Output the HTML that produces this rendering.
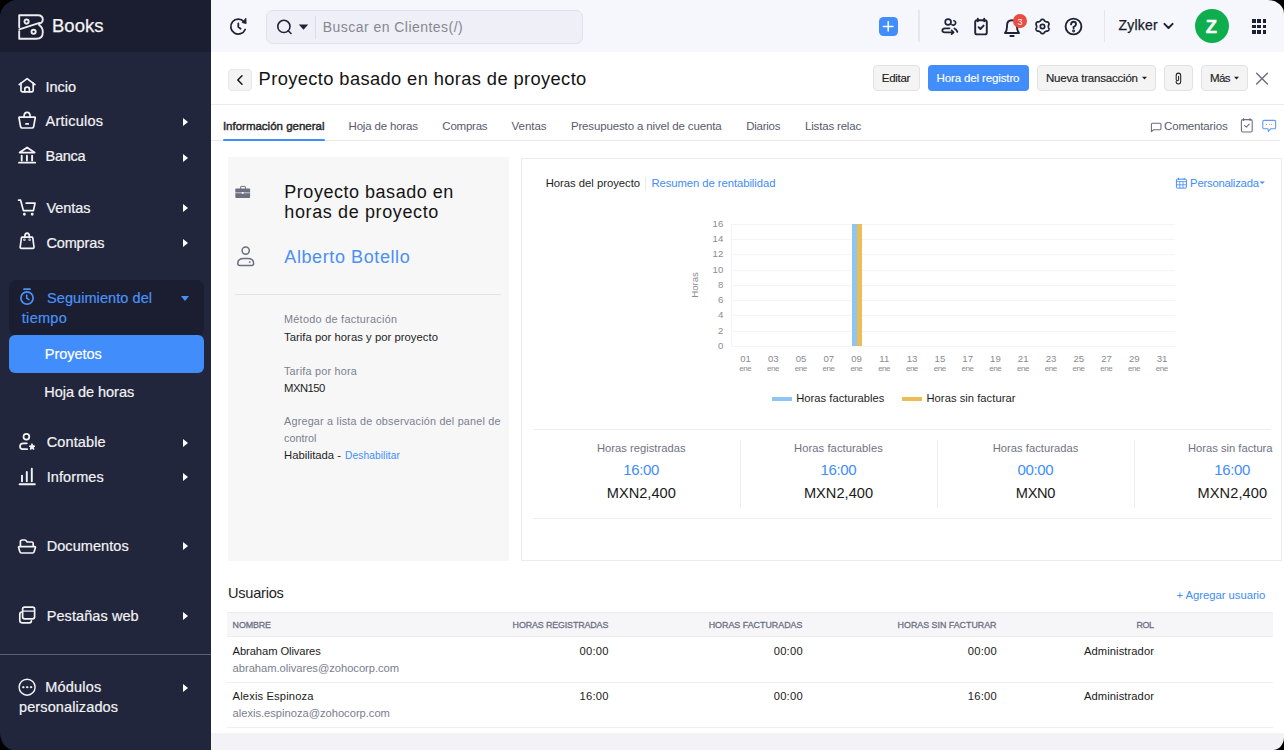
<!DOCTYPE html>
<html><head><meta charset="utf-8">
<style>
*{box-sizing:border-box;margin:0;padding:0}
html,body{width:1284px;height:750px;overflow:hidden;background:#000}
body{font-family:"Liberation Sans",sans-serif;color:#21263c}
.app{position:absolute;left:0;top:0;width:1284px;height:750px;border-radius:18px 16px 11px 14px / 18px 14px 13px 18px;overflow:hidden;background:transparent}
.t{position:absolute;white-space:nowrap}
.b{position:absolute}
</style></head><body><div class="app">
<div class="b" style="left:0px;top:0px;width:211px;height:750px;background:#22263c"></div>
<div class="b" style="left:0px;top:0px;width:211px;height:52px;background:#1b1e30"></div>
<svg class="b" style="left:18px;top:14px" width="26" height="26" viewBox="0 0 26 26" fill="none" stroke="#ececf0" stroke-width="1.9" stroke-linecap="round" stroke-linejoin="round">
<path d="M1.2 13.2 V1.2 H20 Q24.8 1.2 24.8 5.8 Q24.8 8.6 20.8 10"/>
<path d="M1.4 15.4 L21.4 8.9"/>
<path d="M1.2 17.2 V24.8 H18.2 Q24.8 24.8 24.8 18.2 Q24.8 13.4 21.2 11.3"/>
<circle cx="8.6" cy="7.6" r="2.1"/><circle cx="15.6" cy="17.8" r="2.1"/></svg>
<div class="t" style="left:52.00px;top:17.00px;font-size:18.5px;line-height:18.5px;color:#f4f4f6;font-weight:normal;letter-spacing:0.021px;-webkit-text-stroke:0.25px #f4f4f6;">Books</div>
<div class="t" style="left:45.50px;top:80.00px;font-size:14.5px;line-height:14.5px;color:#f2f2f5;font-weight:normal;letter-spacing:-0.032px;-webkit-text-stroke:0.2px #f2f2f5;">Incio</div>
<div class="t" style="left:45.50px;top:114.00px;font-size:14.5px;line-height:14.5px;color:#f2f2f5;font-weight:normal;letter-spacing:0.250px;-webkit-text-stroke:0.2px #f2f2f5;">Articulos</div>
<div class="t" style="left:45.50px;top:149.00px;font-size:14.5px;line-height:14.5px;color:#f2f2f5;font-weight:normal;letter-spacing:-0.278px;-webkit-text-stroke:0.2px #f2f2f5;">Banca</div>
<div class="t" style="left:46.40px;top:201.00px;font-size:14.5px;line-height:14.5px;color:#f2f2f5;font-weight:normal;letter-spacing:-0.068px;-webkit-text-stroke:0.2px #f2f2f5;">Ventas</div>
<div class="t" style="left:46.40px;top:236.00px;font-size:14.5px;line-height:14.5px;color:#f2f2f5;font-weight:normal;letter-spacing:-0.137px;-webkit-text-stroke:0.2px #f2f2f5;">Compras</div>
<div class="t" style="left:46.70px;top:435.00px;font-size:14.5px;line-height:14.5px;color:#f2f2f5;font-weight:normal;letter-spacing:0.137px;-webkit-text-stroke:0.2px #f2f2f5;">Contable</div>
<div class="t" style="left:46.70px;top:470.00px;font-size:14.5px;line-height:14.5px;color:#f2f2f5;font-weight:normal;letter-spacing:0.085px;-webkit-text-stroke:0.2px #f2f2f5;">Informes</div>
<div class="t" style="left:46.70px;top:539.00px;font-size:14.5px;line-height:14.5px;color:#f2f2f5;font-weight:normal;letter-spacing:0.067px;-webkit-text-stroke:0.2px #f2f2f5;">Documentos</div>
<div class="t" style="left:46.70px;top:609.00px;font-size:14.5px;line-height:14.5px;color:#f2f2f5;font-weight:normal;letter-spacing:0.083px;-webkit-text-stroke:0.2px #f2f2f5;">Pestañas web</div>
<div class="t" style="left:45.30px;top:680.00px;font-size:14.5px;line-height:14.5px;color:#f2f2f5;font-weight:normal;letter-spacing:0.199px;-webkit-text-stroke:0.2px #f2f2f5;">Módulos</div>
<div class="t" style="left:19.00px;top:700.00px;font-size:14.5px;line-height:14.5px;color:#f2f2f5;font-weight:normal;letter-spacing:0.113px;-webkit-text-stroke:0.2px #f2f2f5;">personalizados</div>
<div class="b" style="left:9px;top:280px;width:195px;height:56px;background:#1b1e30;border-radius:8px"></div>
<div class="t" style="left:47.00px;top:291.00px;font-size:14.5px;line-height:14.5px;color:#4a92f6;font-weight:normal;letter-spacing:0.073px;-webkit-text-stroke:0.2px #4a92f6;">Seguimiento del</div>
<div class="t" style="left:21.80px;top:311.00px;font-size:14.5px;line-height:14.5px;color:#4a92f6;font-weight:normal;letter-spacing:0.296px;-webkit-text-stroke:0.2px #4a92f6;">tiempo</div>
<div class="b" style="left:9px;top:335px;width:195px;height:38px;background:#408dfb;border-radius:6px"></div>
<div class="t" style="left:44.80px;top:347.00px;font-size:14.5px;line-height:14.5px;color:#fff;font-weight:normal;letter-spacing:-0.032px;-webkit-text-stroke:0.2px #fff;">Proyetos</div>
<div class="t" style="left:44.20px;top:385.00px;font-size:14.5px;line-height:14.5px;color:#f2f2f5;font-weight:normal;letter-spacing:-0.023px;-webkit-text-stroke:0.2px #f2f2f5;">Hoja de horas</div>
<div class="b" style="left:182.5px;top:117.9px;width:0;height:0;border-left:5px solid #fff;border-top:4.5px solid transparent;border-bottom:4.5px solid transparent"></div>
<div class="b" style="left:182.5px;top:153.5px;width:0;height:0;border-left:5px solid #fff;border-top:4.5px solid transparent;border-bottom:4.5px solid transparent"></div>
<div class="b" style="left:182.5px;top:204.0px;width:0;height:0;border-left:5px solid #fff;border-top:4.5px solid transparent;border-bottom:4.5px solid transparent"></div>
<div class="b" style="left:182.5px;top:239.2px;width:0;height:0;border-left:5px solid #fff;border-top:4.5px solid transparent;border-bottom:4.5px solid transparent"></div>
<div class="b" style="left:182.5px;top:439.0px;width:0;height:0;border-left:5px solid #fff;border-top:4.5px solid transparent;border-bottom:4.5px solid transparent"></div>
<div class="b" style="left:182.5px;top:472.7px;width:0;height:0;border-left:5px solid #fff;border-top:4.5px solid transparent;border-bottom:4.5px solid transparent"></div>
<div class="b" style="left:182.5px;top:542.4px;width:0;height:0;border-left:5px solid #fff;border-top:4.5px solid transparent;border-bottom:4.5px solid transparent"></div>
<div class="b" style="left:182.5px;top:611.5px;width:0;height:0;border-left:5px solid #fff;border-top:4.5px solid transparent;border-bottom:4.5px solid transparent"></div>
<div class="b" style="left:182.5px;top:683.5px;width:0;height:0;border-left:5px solid #fff;border-top:4.5px solid transparent;border-bottom:4.5px solid transparent"></div>
<div class="b" style="left:180.5px;top:296.2px;width:0;height:0;border-top:5px solid #4a92f6;border-left:4.5px solid transparent;border-right:4.5px solid transparent"></div>
<div class="b" style="left:0px;top:654px;width:211px;height:1px;background:#5d6072"></div>
<svg class="b" style="left:0;top:0" width="211" height="750" viewBox="0 0 211 750" fill="none" stroke="#f4f4f6" stroke-width="1.7" stroke-linecap="round" stroke-linejoin="round">
<path d="M19.2 84.6 L27.1 78.6 L35 84.6"/>
<path d="M21 83.2 V90.6 Q21 91.8 22.2 91.8 H32 Q33.2 91.8 33.2 90.6 V83.2"/>
<path d="M24.8 91.8 V89.2 Q24.8 87.2 27.1 87.2 Q29.4 87.2 29.4 89.2 V91.8"/>
<path d="M24 116.8 Q24 112.4 27.1 112.4 Q30.2 112.4 30.2 116.8"/>
<path d="M19.4 117.2 H34.8 Q35.4 117.2 35.2 118 L33.6 126.8 Q33.3 128 32 128 H22.2 Q20.9 128 20.6 126.8 L19 118 Q18.8 117.2 19.4 117.2 Z"/>
<path d="M25.9 123.9 H28.3"/>
<path d="M19.6 152.6 L27.1 147.4 L34.6 152.6 Z" stroke-width="1.8"/>
<path d="M21.7 155.8 V160.6 M26.9 155.8 V160.6 M32.1 155.8 V160.6" stroke-width="1.9"/>
<path d="M19 162.7 H35.2" stroke-width="1.8"/>
<path d="M18.6 200.2 H20.6 L23.4 210.6 H33.4 L35 203.2 H26.2"/>
<circle cx="24.4" cy="214.2" r="0.6" fill="#f4f4f6"/><circle cx="32.2" cy="214.2" r="0.6" fill="#f4f4f6"/>
<path d="M24.8 237 Q24.8 233.2 27.1 233.2 Q29.4 233.2 29.4 237"/>
<path d="M22.4 237.2 H31.8 Q32.6 237.2 32.8 238 L34 247 Q34.1 248.4 32.8 248.4 H21.4 Q20.1 248.4 20.2 247 L21.4 238 Q21.6 237.2 22.4 237.2 Z"/>
<circle cx="24.4" cy="239.8" r="0.35" fill="#f4f4f6"/><circle cx="29.6" cy="239.8" r="0.35" fill="#f4f4f6"/>
<circle cx="26.4" cy="436.7" r="2.9"/>
<path d="M26.8 443.3 H23.4 Q20 443.3 20 446.6 Q20 449.2 22.6 449.2 H27.2"/>
<path d="M32.10 444.00 L33.01 445.75 L34.95 446.07 L33.57 447.48 L33.86 449.43 L32.10 448.55 L30.34 449.43 L30.63 447.48 L29.25 446.07 L31.19 445.75 Z" fill="#f4f4f6" stroke-width="1"/>
<path d="M22 481.2 V475.6 M26.8 481.2 V472 M31.8 481.2 V468.6" stroke-width="1.9"/>
<path d="M19.6 484.3 H34.8" stroke-width="1.9"/>
<path d="M20.4 545.6 V541.8 Q20.4 540 22.2 540 H24.8 Q25.6 540 26.2 540.8 L27.2 542 H31.6 Q33.2 542 33.2 543.6 V545.6"/>
<path d="M19.2 546.6 H34.8 Q35.6 546.6 35.4 547.6 L34.2 551.6 Q33.9 553 32.4 553 H21.6 Q20.1 553 19.8 551.6 L18.6 547.6 Q18.4 546.6 19.2 546.6 Z"/>
<path d="M22 612 Q19.8 612 19.8 614.2 V620.6 Q19.8 622.8 22 622.8 H29.4 Q31.4 622.8 31.4 620.8"/>
<rect x="22.6" y="607.2" width="12" height="11.6" rx="2"/>
<path d="M22.8 611.2 H34.4" stroke-width="1.2"/>
<circle cx="27.1" cy="687.2" r="8" stroke-width="1.4"/>
<circle cx="23.2" cy="687.2" r="0.7" fill="#f4f4f6" stroke-width="1"/><circle cx="27.1" cy="687.2" r="0.7" fill="#f4f4f6" stroke-width="1"/><circle cx="31" cy="687.2" r="0.7" fill="#f4f4f6" stroke-width="1"/>
<path d="M24 289.2 H30" stroke="#4a92f6" stroke-width="1.8"/>
<circle cx="27" cy="298" r="6.1" stroke="#4a92f6" stroke-width="1.7"/>
<path d="M26.7 295 V298.2 L28.9 299.6" stroke="#4a92f6" stroke-width="1.6"/>
</svg>
<div class="b" style="left:211px;top:0px;width:1073px;height:52px;background:#f6f7fc"></div>
<div class="b" style="left:266px;top:10px;width:316.5px;height:33.5px;background:#eeeff7;border:1px solid #e0e1e9;border-radius:7px"></div>
<div class="b" style="left:315px;top:15.5px;width:1px;height:23.0px;background:#dcdde6"></div>
<div class="t" style="left:322.70px;top:20.00px;font-size:14px;line-height:14px;color:#87888f;font-weight:normal;letter-spacing:0.464px;">Buscar en Clientes(/)</div>
<div class="b" style="left:879px;top:17px;width:19px;height:19px;background:#408dfb;border-radius:4.5px"></div>
<div class="b" style="left:918.3px;top:10px;width:1.5px;height:32px;background:#e6e7ec"></div>
<div class="b" style="left:1103.6px;top:10px;width:1.400000000000091px;height:32px;background:#e6e7ec"></div>
<div class="t" style="left:1118.60px;top:18.00px;font-size:14px;line-height:14px;color:#171a26;font-weight:normal;letter-spacing:0.178px;-webkit-text-stroke:0.25px #171a26;">Zylker</div>
<div class="b" style="left:1194.8px;top:9.2px;width:34.2px;height:34.2px;border-radius:50%;background:#0eae4f"></div>
<div class="t" style="left:1205.85px;top:18.00px;font-size:18.5px;line-height:18.5px;color:#fff;font-weight:bold;-webkit-text-stroke:0.4px #fff;">Z</div>
<svg class="b" style="left:0;top:0" width="1284" height="52" viewBox="0 0 1284 52" fill="none" stroke="#1f2337" stroke-width="1.9" stroke-linecap="round" stroke-linejoin="round">
<path d="M243.9 21.6 A7.5 7.5 0 1 0 245.2 29.5" stroke-width="1.8"/>
<path d="M245.9 18.6 L246.1 23.6 L242.4 22.6 Z" fill="#1f2337" stroke-width="0.9"/>
<path d="M238.3 23.3 V26.9 L240.6 28.7" stroke-width="1.8"/>
<circle cx="283.9" cy="26.4" r="6.1" stroke-width="1.6"/>
<path d="M288.3 30.8 L291 33.5" stroke-width="1.6"/>
<path d="M298.8 24.6 H308.2 L303.5 29.8 Z" fill="#1f2337" stroke="none"/>
<path d="M883.4 26.4 H893 M888.2 21.8 V31" stroke="#fff" stroke-width="1.5"/>
<path d="M1164.4 23.9 L1168.5 28 L1172.6 23.9" stroke-width="2"/>
<circle cx="948.1" cy="22" r="2.9" stroke-width="1.7"/>
<path d="M954 20.7 A2.3 2.3 0 1 1 951.9 24.7" stroke-width="1.7"/>
<path d="M949.5 28.3 H945 Q942.3 28.6 942.3 30.5 Q942.3 32.4 945 32.4 H953" stroke-width="1.7"/>
<path d="M951.6 30.3 L953.6 32.3 L951.6 34.2" stroke-width="1.7"/>
<path d="M954.4 28.5 Q956.6 29.6 957.4 31.9" stroke-width="1.7"/>
<rect x="975.2" y="20.2" width="11.6" height="14.2" rx="2"/>
<path d="M977.8 18.6 V21.2 M984.2 18.6 V21.2"/>
<path d="M978.6 27.2 L980.4 29 L983.6 25.6"/>
<path d="M1005 33 H1019 Q1017 30.6 1017 27 V25.4 Q1017 20.2 1012 20.2 Q1007 20.2 1007 25.4 V27 Q1007 30.6 1005 33 Z"/>
<path d="M1010.4 36 H1013.6" stroke-width="2"/>
<path d="M1048.35 26.50 L1048.35 26.70 L1048.37 26.91 L1048.40 27.12 L1048.43 27.33 L1048.48 27.55 L1048.54 27.78 L1048.64 28.03 L1048.91 28.34 L1048.99 28.61 L1049.01 28.87 L1049.00 29.13 L1048.96 29.38 L1048.90 29.62 L1048.81 29.85 L1048.69 30.07 L1048.56 30.28 L1048.40 30.48 L1048.22 30.66 L1048.02 30.82 L1047.81 30.95 L1047.57 31.06 L1047.30 31.13 L1046.90 31.06 L1046.63 31.09 L1046.40 31.15 L1046.19 31.22 L1045.98 31.30 L1045.79 31.38 L1045.60 31.47 L1045.42 31.57 L1045.25 31.67 L1045.08 31.79 L1044.91 31.92 L1044.74 32.05 L1044.58 32.21 L1044.41 32.38 L1044.25 32.59 L1044.11 32.97 L1043.92 33.17 L1043.70 33.32 L1043.48 33.44 L1043.24 33.53 L1043.00 33.60 L1042.75 33.64 L1042.50 33.65 L1042.25 33.64 L1042.00 33.60 L1041.76 33.53 L1041.52 33.44 L1041.30 33.32 L1041.08 33.17 L1040.89 32.97 L1040.75 32.59 L1040.59 32.38 L1040.42 32.21 L1040.26 32.05 L1040.09 31.92 L1039.92 31.79 L1039.75 31.67 L1039.58 31.57 L1039.40 31.47 L1039.21 31.38 L1039.02 31.30 L1038.81 31.22 L1038.60 31.15 L1038.37 31.09 L1038.10 31.06 L1037.70 31.13 L1037.43 31.06 L1037.19 30.95 L1036.98 30.82 L1036.78 30.66 L1036.60 30.48 L1036.44 30.28 L1036.31 30.07 L1036.19 29.85 L1036.10 29.62 L1036.04 29.38 L1036.00 29.13 L1035.99 28.87 L1036.01 28.61 L1036.09 28.34 L1036.36 28.03 L1036.46 27.78 L1036.52 27.55 L1036.57 27.33 L1036.60 27.12 L1036.63 26.91 L1036.65 26.70 L1036.65 26.50 L1036.65 26.30 L1036.63 26.09 L1036.60 25.88 L1036.57 25.67 L1036.52 25.45 L1036.46 25.22 L1036.36 24.97 L1036.09 24.66 L1036.01 24.39 L1035.99 24.13 L1036.00 23.87 L1036.04 23.62 L1036.10 23.38 L1036.19 23.15 L1036.31 22.92 L1036.44 22.72 L1036.60 22.52 L1036.78 22.34 L1036.98 22.18 L1037.19 22.05 L1037.43 21.94 L1037.70 21.87 L1038.10 21.94 L1038.37 21.91 L1038.60 21.85 L1038.81 21.78 L1039.02 21.70 L1039.21 21.62 L1039.40 21.53 L1039.58 21.43 L1039.75 21.33 L1039.92 21.21 L1040.09 21.08 L1040.26 20.95 L1040.42 20.79 L1040.59 20.62 L1040.75 20.41 L1040.89 20.03 L1041.08 19.83 L1041.30 19.68 L1041.52 19.56 L1041.76 19.47 L1042.00 19.40 L1042.25 19.36 L1042.50 19.35 L1042.75 19.36 L1043.00 19.40 L1043.24 19.47 L1043.48 19.56 L1043.70 19.68 L1043.92 19.83 L1044.11 20.03 L1044.25 20.41 L1044.41 20.62 L1044.58 20.79 L1044.74 20.95 L1044.91 21.08 L1045.08 21.21 L1045.25 21.33 L1045.42 21.43 L1045.60 21.53 L1045.79 21.62 L1045.98 21.70 L1046.19 21.78 L1046.40 21.85 L1046.63 21.91 L1046.90 21.94 L1047.30 21.87 L1047.57 21.94 L1047.81 22.05 L1048.02 22.18 L1048.22 22.34 L1048.40 22.52 L1048.56 22.72 L1048.69 22.92 L1048.81 23.15 L1048.90 23.38 L1048.96 23.62 L1049.00 23.87 L1049.01 24.13 L1048.99 24.39 L1048.91 24.66 L1048.64 24.97 L1048.54 25.22 L1048.48 25.45 L1048.43 25.67 L1048.40 25.88 L1048.37 26.09 L1048.35 26.30 L1048.35 26.50 Z" stroke-width="1.7"/>
<circle cx="1042.5" cy="26.5" r="2.2" stroke-width="1.7"/>
<circle cx="1073.5" cy="26.5" r="7.9"/>
<path d="M1071.1 24.4 Q1071.1 21.8 1073.6 21.8 Q1076 21.8 1076 24.2 Q1076 25.8 1073.6 26.8 V28.2"/>
<circle cx="1073.6" cy="31" r="0.5" fill="#1f2337"/>
</svg>
<div class="b" style="left:1013.2px;top:14.2px;width:13.8px;height:13.8px;border-radius:50%;background:#ec4b41"></div>
<div class="t" style="left:1017.60px;top:18.00px;font-size:9px;line-height:9px;color:#fff;font-weight:normal;">3</div>
<div class="b" style="left:1252.0px;top:19.2px;width:3.7000000000000455px;height:3.6999999999999993px;background:#1c2034"></div>
<div class="b" style="left:1252.0px;top:24.6px;width:3.7000000000000455px;height:3.6999999999999993px;background:#1c2034"></div>
<div class="b" style="left:1252.0px;top:30.0px;width:3.7000000000000455px;height:3.700000000000003px;background:#1c2034"></div>
<div class="b" style="left:1257.25px;top:19.2px;width:3.7000000000000455px;height:3.6999999999999993px;background:#1c2034"></div>
<div class="b" style="left:1257.25px;top:24.6px;width:3.7000000000000455px;height:3.6999999999999993px;background:#1c2034"></div>
<div class="b" style="left:1257.25px;top:30.0px;width:3.7000000000000455px;height:3.700000000000003px;background:#1c2034"></div>
<div class="b" style="left:1262.5px;top:19.2px;width:3.7000000000000455px;height:3.6999999999999993px;background:#1c2034"></div>
<div class="b" style="left:1262.5px;top:24.6px;width:3.7000000000000455px;height:3.6999999999999993px;background:#1c2034"></div>
<div class="b" style="left:1262.5px;top:30.0px;width:3.7000000000000455px;height:3.700000000000003px;background:#1c2034"></div>
<div class="b" style="left:211px;top:52px;width:1073px;height:681px;background:#fff"></div>
<div class="b" style="left:211px;top:103.5px;width:1073px;height:1.0px;background:#ebebef"></div>
<div class="b" style="left:228px;top:69px;width:24px;height:22px;background:#f4f4f5;border:1px solid #e6e6e9;border-radius:4px"></div>
<svg class="b" style="left:228px;top:69px" width="24" height="22" viewBox="0 0 24 22" fill="none" stroke="#1c1c1c" stroke-width="1.6" stroke-linecap="round" stroke-linejoin="round"><path d="M14 6.8 L9.8 11 L14 15.2"/></svg>
<div class="t" style="left:258.60px;top:70.00px;font-size:18.3px;line-height:18.3px;color:#141414;font-weight:normal;letter-spacing:0.390px;">Proyecto basado en horas de proyecto</div>
<div class="b" style="left:873px;top:65px;width:46.5px;height:26px;background:#f4f4f5;border:1px solid #e2e2e6;border-radius:4px"></div>
<div class="t" style="left:881.80px;top:73.00px;font-size:11.5px;line-height:11.5px;color:#222;font-weight:normal;letter-spacing:-0.288px;-webkit-text-stroke:0.15px #222;">Editar</div>
<div class="b" style="left:928px;top:65px;width:100.59999999999991px;height:26px;background:#408dfb;border-radius:4px"></div>
<div class="t" style="left:936.50px;top:73.00px;font-size:11.5px;line-height:11.5px;color:#fff;font-weight:normal;letter-spacing:-0.126px;-webkit-text-stroke:0.15px #fff;">Hora del registro</div>
<div class="b" style="left:1037.4px;top:65.2px;width:118.39999999999986px;height:25.799999999999997px;background:#f4f4f5;border:1px solid #e2e2e6;border-radius:4px"></div>
<div class="t" style="left:1046.00px;top:73.00px;font-size:11.5px;line-height:11.5px;color:#222;font-weight:normal;letter-spacing:-0.203px;-webkit-text-stroke:0.15px #222;">Nueva transacción</div>
<div class="b" style="left:1164.3px;top:65.2px;width:28.299999999999955px;height:25.799999999999997px;background:#f4f4f5;border:1px solid #e2e2e6;border-radius:4px"></div>
<div class="b" style="left:1201.3px;top:65.2px;width:46.700000000000045px;height:25.799999999999997px;background:#f4f4f5;border:1px solid #e2e2e6;border-radius:4px"></div>
<div class="t" style="left:1210.10px;top:73.00px;font-size:11.5px;line-height:11.5px;color:#222;font-weight:normal;letter-spacing:-0.663px;-webkit-text-stroke:0.15px #222;">Más</div>
<svg class="b" style="left:0;top:52px" width="1284" height="52" viewBox="0 52 1284 52" fill="none" stroke="#222" stroke-linecap="round" stroke-linejoin="round">
<path d="M1142 76.8 H1147 L1144.5 79.6 Z" fill="#222" stroke="none"/>
<path d="M1234 76.8 H1239 L1236.5 79.6 Z" fill="#222" stroke="none"/>
<path d="M1256.6 73.2 L1267.4 84 M1267.4 73.2 L1256.6 84" stroke="#6f7280" stroke-width="1.5"/>
<path d="M1176.1 81.4 Q1176.1 83.9 1178.4 83.9 Q1180.7 83.9 1180.7 81.4 V75.5 Q1180.7 73.1 1178.4 73.1 Q1176.2 73.1 1176.2 75.5 V79.5 Q1176.2 80.8 1177.4 80.8 Q1178.6 80.8 1178.6 79.5 V76.3" stroke-width="1.05"/>
</svg>
<div class="b" style="left:211px;top:140px;width:1069px;height:1px;background:#e8e8ec"></div>
<div class="t" style="left:222.90px;top:121.00px;font-size:11.5px;line-height:11.5px;color:#2a2a2e;font-weight:normal;letter-spacing:-0.003px;-webkit-text-stroke:0.45px #2a2a2e;">Información general</div>
<div class="b" style="left:222.5px;top:139px;width:102.5px;height:2px;background:#408dfb;border-radius:1px"></div>
<div class="t" style="left:348.50px;top:121.00px;font-size:11.5px;line-height:11.5px;color:#575b6d;font-weight:normal;letter-spacing:-0.175px;">Hoja de horas</div>
<div class="t" style="left:442.30px;top:121.00px;font-size:11.5px;line-height:11.5px;color:#575b6d;font-weight:normal;letter-spacing:-0.225px;">Compras</div>
<div class="t" style="left:511.60px;top:121.00px;font-size:11.5px;line-height:11.5px;color:#575b6d;font-weight:normal;letter-spacing:-0.054px;">Ventas</div>
<div class="t" style="left:570.90px;top:121.00px;font-size:11.5px;line-height:11.5px;color:#575b6d;font-weight:normal;letter-spacing:-0.140px;">Presupuesto a nivel de cuenta</div>
<div class="t" style="left:746.30px;top:121.00px;font-size:11.5px;line-height:11.5px;color:#575b6d;font-weight:normal;letter-spacing:-0.281px;">Diarios</div>
<div class="t" style="left:805.00px;top:121.00px;font-size:11.5px;line-height:11.5px;color:#575b6d;font-weight:normal;letter-spacing:-0.179px;">Listas relac</div>
<div class="t" style="left:1164.00px;top:121.00px;font-size:11.5px;line-height:11.5px;color:#575b6d;font-weight:normal;letter-spacing:-0.149px;">Comentarios</div>
<svg class="b" style="left:0;top:104px" width="1284" height="40" viewBox="0 104 1284 40" fill="none" stroke="#6b6f80" stroke-width="1.1" stroke-linecap="round" stroke-linejoin="round">
<path d="M1151.4 131.6 V124.4 Q1151.4 123.2 1152.6 123.2 H1159.8 Q1161 123.2 1161 124.4 V128.6 Q1161 129.8 1159.8 129.8 H1153.6 L1151.4 131.6 Z"/>
<rect x="1241.4" y="119.6" width="10.8" height="12.4" rx="1.6"/>
<path d="M1243.6 118.6 V120.4 M1250 118.6 V120.4"/>
<path d="M1244.6 125.6 L1246.4 127.2 L1249.2 124.2"/>
<path d="M1263.9 120.4 H1274.5 Q1275.6 120.4 1275.6 121.5 V127.7 Q1275.6 128.8 1274.5 128.8 H1270.6 L1268.3 131.4 L1268 128.8 H1263.9 Q1262.8 128.8 1262.8 127.7 V121.5 Q1262.8 120.4 1263.9 120.4 Z" stroke="#5c9cf2" stroke-width="1.1"/>
</svg>
<div class="b" style="left:1266px;top:124px;width:1.3px;height:1.3px;background:#e26a6a;border-radius:50%"></div><div class="b" style="left:1268.6px;top:124px;width:1.3px;height:1.3px;background:#e26a6a;border-radius:50%"></div><div class="b" style="left:1271.2px;top:124px;width:1.3px;height:1.3px;background:#e26a6a;border-radius:50%"></div>
<div class="b" style="left:227.5px;top:157px;width:281.5px;height:403.5px;background:#f7f7f8"></div>
<svg class="b" style="left:0;top:150px" width="520" height="130" viewBox="0 150 520 130" fill="none" stroke="#6b6f80" stroke-linecap="round" stroke-linejoin="round">
<path d="M240.6 188.8 V187 Q240.6 186.4 241.2 186.4 H244.8 Q245.4 186.4 245.4 187 V188.8" stroke-width="1"/>
<rect x="235.3" y="188.6" width="14.8" height="9.5" rx="1" fill="#6b6f80" stroke="none"/>
<path d="M235.3 192.8 H250.1" stroke="#f7f7f8" stroke-width="0.7"/>
<rect x="241.8" y="192" width="1.8" height="1.8" fill="#f7f7f8" stroke="none"/>
<circle cx="245.7" cy="250.6" r="3.6" stroke-width="1.5"/>
<path d="M240 265.4 H251.6 Q253.6 265.4 253.6 263.4 Q253.6 258.6 247.6 258.6 H243.8 Q237.8 258.6 237.8 263.4 Q237.8 265.4 240 265.4 Z" stroke-width="1.5"/>
<circle cx="249.6" cy="262.1" r="0.45" fill="#6b6f80" stroke-width="0.8"/>
</svg>
<div class="t" style="left:284.30px;top:183.00px;font-size:18px;line-height:18px;color:#141414;font-weight:normal;letter-spacing:0.523px;">Proyecto basado en</div>
<div class="t" style="left:284.30px;top:203.00px;font-size:18px;line-height:18px;color:#141414;font-weight:normal;letter-spacing:0.619px;">horas de proyecto</div>
<div class="t" style="left:284.30px;top:248.00px;font-size:18px;line-height:18px;color:#4b8ff3;font-weight:normal;letter-spacing:0.595px;">Alberto Botello</div>
<div class="b" style="left:235px;top:294px;width:266px;height:1px;background:#e4e4e8"></div>
<div class="t" style="left:284.00px;top:314.00px;font-size:10.8px;line-height:10.8px;color:#7b7f90;font-weight:normal;letter-spacing:0.307px;">Método de facturación</div>
<div class="t" style="left:284.00px;top:332.00px;font-size:11.3px;line-height:11.3px;color:#1e1e1e;font-weight:normal;letter-spacing:0.025px;">Tarifa por horas y por proyecto</div>
<div class="t" style="left:284.00px;top:366.00px;font-size:10.8px;line-height:10.8px;color:#7b7f90;font-weight:normal;letter-spacing:0.226px;">Tarifa por hora</div>
<div class="t" style="left:284.00px;top:383.00px;font-size:11.3px;line-height:11.3px;color:#1e1e1e;font-weight:normal;letter-spacing:-0.533px;">MXN150</div>
<div class="t" style="left:284.00px;top:416.00px;font-size:10.8px;line-height:10.8px;color:#7b7f90;font-weight:normal;letter-spacing:0.211px;">Agregar a lista de observación del panel de</div>
<div class="t" style="left:284.00px;top:433.00px;font-size:10.8px;line-height:10.8px;color:#7b7f90;font-weight:normal;">control</div>
<div class="t" style="left:284.00px;top:450.00px;font-size:11.3px;line-height:11.3px;color:#1e1e1e;font-weight:normal;letter-spacing:-0.014px;">Habilitada -</div>
<div class="t" style="left:345.00px;top:451.00px;font-size:10.2px;line-height:10.2px;color:#408dfb;font-weight:normal;letter-spacing:0.104px;">Deshabilitar</div>
<div class="b" style="left:521px;top:157.5px;width:760.5px;height:403.5px;background:#fff;border:1px solid #ececf0"></div>
<div class="t" style="left:545.70px;top:178.00px;font-size:11.3px;line-height:11.3px;color:#1e1e1e;font-weight:normal;letter-spacing:-0.026px;">Horas del proyecto</div>
<div class="b" style="left:645.3px;top:177px;width:1.0px;height:14px;background:#ebebef"></div>
<div class="t" style="left:651.40px;top:178.00px;font-size:11.3px;line-height:11.3px;color:#408dfb;font-weight:normal;letter-spacing:-0.070px;">Resumen de rentabilidad</div>
<div class="t" style="left:1190.10px;top:178.00px;font-size:11.3px;line-height:11.3px;color:#408dfb;font-weight:normal;letter-spacing:-0.226px;">Personalizada</div>
<svg class="b" style="left:1170px;top:172px" width="100" height="24" viewBox="1170 172 100 24" fill="none" stroke="#408dfb" stroke-width="1" >
<rect x="1176.4" y="179.2" width="10" height="8.9" rx="0.8"/>
<path d="M1176.4 181.6 H1186.4 M1176.4 184.8 H1186.4 M1179.8 181.6 V188 M1183 181.6 V188" stroke-width="0.8"/>
<path d="M1178.6 177.8 V180 M1184.2 177.8 V180"/>
<path d="M1259.6 181.4 H1264.9 L1262.25 184 Z" fill="#408dfb" stroke="none"/>
</svg>
<div class="b" style="left:731.7px;top:346.0px;width:443.29999999999995px;height:1.0px;background:#f4f4f6"></div>
<div class="t" style="left:717.96px;top:341.00px;font-size:9.6px;line-height:9.6px;color:#8b8b90;font-weight:normal;">0</div>
<div class="b" style="left:731.7px;top:330.7px;width:443.29999999999995px;height:1.0px;background:#f4f4f6"></div>
<div class="t" style="left:717.96px;top:326.00px;font-size:9.6px;line-height:9.6px;color:#8b8b90;font-weight:normal;">2</div>
<div class="b" style="left:731.7px;top:315.4px;width:443.29999999999995px;height:1.0px;background:#f4f4f6"></div>
<div class="t" style="left:717.96px;top:310.00px;font-size:9.6px;line-height:9.6px;color:#8b8b90;font-weight:normal;">4</div>
<div class="b" style="left:731.7px;top:300.1px;width:443.29999999999995px;height:1.0px;background:#f4f4f6"></div>
<div class="t" style="left:717.96px;top:295.00px;font-size:9.6px;line-height:9.6px;color:#8b8b90;font-weight:normal;">6</div>
<div class="b" style="left:731.7px;top:284.8px;width:443.29999999999995px;height:1.0px;background:#f4f4f6"></div>
<div class="t" style="left:717.96px;top:280.00px;font-size:9.6px;line-height:9.6px;color:#8b8b90;font-weight:normal;">8</div>
<div class="b" style="left:731.7px;top:269.5px;width:443.29999999999995px;height:1.0px;background:#f4f4f6"></div>
<div class="t" style="left:712.62px;top:265.00px;font-size:9.6px;line-height:9.6px;color:#8b8b90;font-weight:normal;">10</div>
<div class="b" style="left:731.7px;top:254.2px;width:443.29999999999995px;height:1.0px;background:#f4f4f6"></div>
<div class="t" style="left:712.62px;top:249.00px;font-size:9.6px;line-height:9.6px;color:#8b8b90;font-weight:normal;">12</div>
<div class="b" style="left:731.7px;top:238.9px;width:443.29999999999995px;height:1.0px;background:#f4f4f6"></div>
<div class="t" style="left:712.62px;top:234.00px;font-size:9.6px;line-height:9.6px;color:#8b8b90;font-weight:normal;">14</div>
<div class="b" style="left:731.7px;top:223.6px;width:443.29999999999995px;height:1.0px;background:#f4f4f6"></div>
<div class="t" style="left:712.62px;top:219.00px;font-size:9.6px;line-height:9.6px;color:#8b8b90;font-weight:normal;">16</div>
<div class="t" style="left:675.4px;top:279.9px;width:40px;height:10px;line-height:10px;font-size:9.6px;color:#8b8b90;text-align:center;transform:rotate(-90deg)">Horas</div>
<div class="t" style="left:740.16px;top:354.00px;font-size:9.6px;line-height:9.6px;color:#8b8b90;font-weight:normal;">01</div>
<div class="t" style="left:739.30px;top:365.00px;font-size:8px;line-height:8px;color:#8b8b90;font-weight:normal;letter-spacing:-0.474px;">ene</div>
<div class="t" style="left:767.93px;top:354.00px;font-size:9.6px;line-height:9.6px;color:#8b8b90;font-weight:normal;">03</div>
<div class="t" style="left:767.07px;top:365.00px;font-size:8px;line-height:8px;color:#8b8b90;font-weight:normal;letter-spacing:-0.474px;">ene</div>
<div class="t" style="left:795.70px;top:354.00px;font-size:9.6px;line-height:9.6px;color:#8b8b90;font-weight:normal;">05</div>
<div class="t" style="left:794.84px;top:365.00px;font-size:8px;line-height:8px;color:#8b8b90;font-weight:normal;letter-spacing:-0.474px;">ene</div>
<div class="t" style="left:823.47px;top:354.00px;font-size:9.6px;line-height:9.6px;color:#8b8b90;font-weight:normal;">07</div>
<div class="t" style="left:822.61px;top:365.00px;font-size:8px;line-height:8px;color:#8b8b90;font-weight:normal;letter-spacing:-0.474px;">ene</div>
<div class="t" style="left:851.24px;top:354.00px;font-size:9.6px;line-height:9.6px;color:#8b8b90;font-weight:normal;">09</div>
<div class="t" style="left:850.38px;top:365.00px;font-size:8px;line-height:8px;color:#8b8b90;font-weight:normal;letter-spacing:-0.474px;">ene</div>
<div class="t" style="left:879.37px;top:354.00px;font-size:9.6px;line-height:9.6px;color:#8b8b90;font-weight:normal;">11</div>
<div class="t" style="left:878.15px;top:365.00px;font-size:8px;line-height:8px;color:#8b8b90;font-weight:normal;letter-spacing:-0.474px;">ene</div>
<div class="t" style="left:906.78px;top:354.00px;font-size:9.6px;line-height:9.6px;color:#8b8b90;font-weight:normal;">13</div>
<div class="t" style="left:905.92px;top:365.00px;font-size:8px;line-height:8px;color:#8b8b90;font-weight:normal;letter-spacing:-0.474px;">ene</div>
<div class="t" style="left:934.55px;top:354.00px;font-size:9.6px;line-height:9.6px;color:#8b8b90;font-weight:normal;">15</div>
<div class="t" style="left:933.69px;top:365.00px;font-size:8px;line-height:8px;color:#8b8b90;font-weight:normal;letter-spacing:-0.474px;">ene</div>
<div class="t" style="left:962.32px;top:354.00px;font-size:9.6px;line-height:9.6px;color:#8b8b90;font-weight:normal;">17</div>
<div class="t" style="left:961.46px;top:365.00px;font-size:8px;line-height:8px;color:#8b8b90;font-weight:normal;letter-spacing:-0.474px;">ene</div>
<div class="t" style="left:990.09px;top:354.00px;font-size:9.6px;line-height:9.6px;color:#8b8b90;font-weight:normal;">19</div>
<div class="t" style="left:989.23px;top:365.00px;font-size:8px;line-height:8px;color:#8b8b90;font-weight:normal;letter-spacing:-0.474px;">ene</div>
<div class="t" style="left:1017.86px;top:354.00px;font-size:9.6px;line-height:9.6px;color:#8b8b90;font-weight:normal;">21</div>
<div class="t" style="left:1017.00px;top:365.00px;font-size:8px;line-height:8px;color:#8b8b90;font-weight:normal;letter-spacing:-0.474px;">ene</div>
<div class="t" style="left:1045.63px;top:354.00px;font-size:9.6px;line-height:9.6px;color:#8b8b90;font-weight:normal;">23</div>
<div class="t" style="left:1044.77px;top:365.00px;font-size:8px;line-height:8px;color:#8b8b90;font-weight:normal;letter-spacing:-0.474px;">ene</div>
<div class="t" style="left:1073.40px;top:354.00px;font-size:9.6px;line-height:9.6px;color:#8b8b90;font-weight:normal;">25</div>
<div class="t" style="left:1072.54px;top:365.00px;font-size:8px;line-height:8px;color:#8b8b90;font-weight:normal;letter-spacing:-0.474px;">ene</div>
<div class="t" style="left:1101.17px;top:354.00px;font-size:9.6px;line-height:9.6px;color:#8b8b90;font-weight:normal;">27</div>
<div class="t" style="left:1100.31px;top:365.00px;font-size:8px;line-height:8px;color:#8b8b90;font-weight:normal;letter-spacing:-0.474px;">ene</div>
<div class="t" style="left:1128.94px;top:354.00px;font-size:9.6px;line-height:9.6px;color:#8b8b90;font-weight:normal;">29</div>
<div class="t" style="left:1128.08px;top:365.00px;font-size:8px;line-height:8px;color:#8b8b90;font-weight:normal;letter-spacing:-0.474px;">ene</div>
<div class="t" style="left:1156.71px;top:354.00px;font-size:9.6px;line-height:9.6px;color:#8b8b90;font-weight:normal;">31</div>
<div class="t" style="left:1155.85px;top:365.00px;font-size:8px;line-height:8px;color:#8b8b90;font-weight:normal;letter-spacing:-0.474px;">ene</div>
<div class="b" style="left:731px;top:224px;width:1px;height:123px;background:#f3f3f5"></div>
<div class="b" style="left:852.3px;top:224.1px;width:4.900000000000091px;height:122.4px;background:#8ec5f3"></div>
<div class="b" style="left:857.2px;top:224.1px;width:4.899999999999977px;height:122.4px;background:#ebbd55"></div>
<div class="b" style="left:771.6px;top:396.6px;width:20.399999999999977px;height:4.7999999999999545px;background:#8ec5f3"></div>
<div class="t" style="left:796.20px;top:393.00px;font-size:11.2px;line-height:11.2px;color:#1e1e1e;font-weight:normal;letter-spacing:0.033px;">Horas facturables</div>
<div class="b" style="left:901.9px;top:396.6px;width:20.399999999999977px;height:4.7999999999999545px;background:#ebbd55"></div>
<div class="t" style="left:926.50px;top:393.00px;font-size:11.2px;line-height:11.2px;color:#1e1e1e;font-weight:normal;letter-spacing:0.036px;">Horas sin facturar</div>
<div class="b" style="left:533px;top:429px;width:738px;height:1px;background:#efeff2"></div>
<div class="b" style="left:533px;top:518px;width:738px;height:1px;background:#efeff2"></div>
<div class="b" style="left:739.7px;top:439.6px;width:1.0px;height:68.5px;background:#efeff2"></div>
<div class="b" style="left:936.9px;top:439.6px;width:1.0px;height:68.5px;background:#efeff2"></div>
<div class="b" style="left:1133.6px;top:439.6px;width:1.0px;height:68.5px;background:#efeff2"></div>
<div class="b" style="left:521px;top:430px;width:752px;height:88px;overflow:hidden">
<div class="t" style="left:75.95px;top:13.00px;font-size:11.2px;line-height:11.2px;color:#6f7384;font-weight:normal;letter-spacing:0.019px;">Horas registradas</div>
<div class="t" style="left:102.30px;top:32.00px;font-size:15px;line-height:15px;color:#408dfb;font-weight:normal;letter-spacing:-0.384px;">16:00</div>
<div class="t" style="left:85.70px;top:56.00px;font-size:14.6px;line-height:14.6px;color:#1a1a1a;font-weight:normal;letter-spacing:0.032px;">MXN2,400</div>
<div class="t" style="left:273.10px;top:13.00px;font-size:11.2px;line-height:11.2px;color:#6f7384;font-weight:normal;letter-spacing:0.064px;">Horas facturables</div>
<div class="t" style="left:299.50px;top:32.00px;font-size:15px;line-height:15px;color:#408dfb;font-weight:normal;letter-spacing:-0.384px;">16:00</div>
<div class="t" style="left:282.90px;top:56.00px;font-size:14.6px;line-height:14.6px;color:#1a1a1a;font-weight:normal;letter-spacing:0.032px;">MXN2,400</div>
<div class="t" style="left:471.70px;top:13.00px;font-size:11.2px;line-height:11.2px;color:#6f7384;font-weight:normal;letter-spacing:0.034px;">Horas facturadas</div>
<div class="t" style="left:496.60px;top:32.00px;font-size:15px;line-height:15px;color:#408dfb;font-weight:normal;letter-spacing:-0.384px;">00:00</div>
<div class="t" style="left:494.85px;top:56.00px;font-size:14.6px;line-height:14.6px;color:#1a1a1a;font-weight:normal;letter-spacing:-0.354px;">MXN0</div>
<div class="t" style="left:667.00px;top:13.00px;font-size:11.2px;line-height:11.2px;color:#6f7384;font-weight:normal;">Horas sin facturar</div>
<div class="t" style="left:693.30px;top:32.00px;font-size:15px;line-height:15px;color:#408dfb;font-weight:normal;letter-spacing:-0.384px;">16:00</div>
<div class="t" style="left:676.45px;top:56.00px;font-size:14.6px;line-height:14.6px;color:#1a1a1a;font-weight:normal;letter-spacing:0.103px;">MXN2,400</div>
</div>
<div class="t" style="left:227.90px;top:586.00px;font-size:14.6px;line-height:14.6px;color:#1e1e1e;font-weight:normal;letter-spacing:-0.230px;">Usuarios</div>
<div class="t" style="left:1176.40px;top:590.00px;font-size:11.3px;line-height:11.3px;color:#408dfb;font-weight:normal;letter-spacing:-0.032px;">+ Agregar usuario</div>
<div class="b" style="left:227px;top:611.5px;width:1046px;height:25.5px;background:#f6f6f9;border-top:1px solid #ededf1;border-bottom:1px solid #ededf1"></div>
<div class="t" style="left:232.60px;top:621.00px;font-size:8.9px;line-height:8.9px;color:#6d7184;font-weight:normal;letter-spacing:-0.113px;-webkit-text-stroke:0.3px #6d7184;">NOMBRE</div>
<div class="t" style="left:512.60px;top:621.00px;font-size:8.9px;line-height:8.9px;color:#6d7184;font-weight:normal;letter-spacing:-0.120px;-webkit-text-stroke:0.3px #6d7184;">HORAS REGISTRADAS</div>
<div class="t" style="left:708.70px;top:621.00px;font-size:8.9px;line-height:8.9px;color:#6d7184;font-weight:normal;letter-spacing:0.003px;-webkit-text-stroke:0.3px #6d7184;">HORAS FACTURADAS</div>
<div class="t" style="left:897.60px;top:621.00px;font-size:8.9px;line-height:8.9px;color:#6d7184;font-weight:normal;letter-spacing:-0.011px;-webkit-text-stroke:0.3px #6d7184;">HORAS SIN FACTURAR</div>
<div class="t" style="left:1136.50px;top:621.00px;font-size:8.9px;line-height:8.9px;color:#6d7184;font-weight:normal;letter-spacing:-0.400px;-webkit-text-stroke:0.3px #6d7184;">ROL</div>
<div class="t" style="left:232.60px;top:646.00px;font-size:11.2px;line-height:11.2px;color:#1a1a1a;font-weight:normal;letter-spacing:-0.089px;">Abraham Olivares</div>
<div class="t" style="left:232.60px;top:663.00px;font-size:11.2px;line-height:11.2px;color:#7a7e8e;font-weight:normal;letter-spacing:-0.033px;">abraham.olivares@zohocorp.com</div>
<div class="t" style="left:579.60px;top:646.00px;font-size:11.2px;line-height:11.2px;color:#1a1a1a;font-weight:normal;letter-spacing:0.243px;">00:00</div>
<div class="t" style="left:773.70px;top:646.00px;font-size:11.2px;line-height:11.2px;color:#1a1a1a;font-weight:normal;letter-spacing:0.243px;">00:00</div>
<div class="t" style="left:967.80px;top:646.00px;font-size:11.2px;line-height:11.2px;color:#1a1a1a;font-weight:normal;letter-spacing:0.243px;">00:00</div>
<div class="t" style="left:1084.00px;top:646.00px;font-size:11.2px;line-height:11.2px;color:#1a1a1a;font-weight:normal;letter-spacing:0.076px;">Administrador</div>
<div class="t" style="left:232.60px;top:691.00px;font-size:11.2px;line-height:11.2px;color:#1a1a1a;font-weight:normal;letter-spacing:0.138px;">Alexis Espinoza</div>
<div class="t" style="left:232.60px;top:708.00px;font-size:11.2px;line-height:11.2px;color:#7a7e8e;font-weight:normal;letter-spacing:-0.029px;">alexis.espinoza@zohocorp.com</div>
<div class="t" style="left:579.60px;top:691.00px;font-size:11.2px;line-height:11.2px;color:#1a1a1a;font-weight:normal;letter-spacing:0.243px;">16:00</div>
<div class="t" style="left:773.70px;top:691.00px;font-size:11.2px;line-height:11.2px;color:#1a1a1a;font-weight:normal;letter-spacing:0.243px;">00:00</div>
<div class="t" style="left:967.80px;top:691.00px;font-size:11.2px;line-height:11.2px;color:#1a1a1a;font-weight:normal;letter-spacing:0.243px;">16:00</div>
<div class="t" style="left:1084.00px;top:691.00px;font-size:11.2px;line-height:11.2px;color:#1a1a1a;font-weight:normal;letter-spacing:0.076px;">Administrador</div>
<div class="b" style="left:227px;top:682px;width:1046px;height:1px;background:#efeff2"></div>
<div class="b" style="left:227px;top:727px;width:1046px;height:1px;background:#efeff2"></div>
<div class="b" style="left:211px;top:733px;width:1073px;height:17px;background:#f3f3f7"></div>
</div></body></html>
